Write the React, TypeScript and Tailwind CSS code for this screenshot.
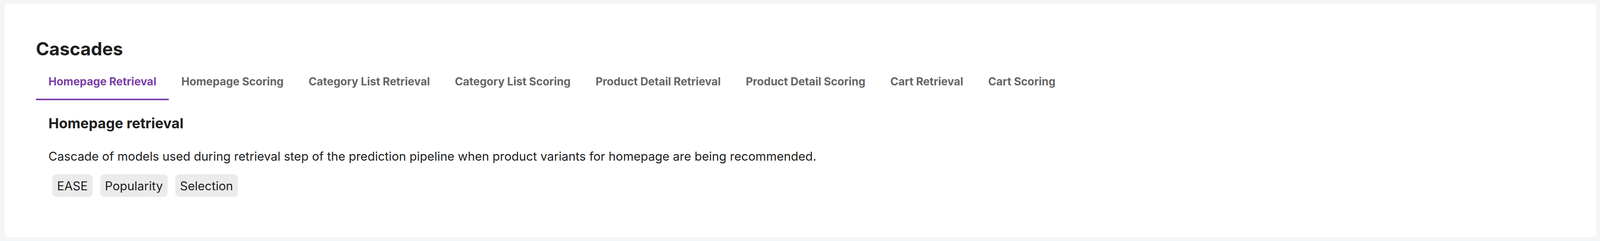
import { useState } from 'react';

const TABS = [
  'Homepage Retrieval',
  'Homepage Scoring',
  'Category List Retrieval',
  'Category List Scoring',
  'Product Detail Retrieval',
  'Product Detail Scoring',
  'Cart Retrieval',
  'Cart Scoring',
];

const MODELS = ['EASE', 'Popularity', 'Selection'];

export default function App() {
  const [active, setActive] = useState(0);

  return (
    <div className="h-[618px] bg-[#f4f5f7] py-[10px] pl-[12px] pr-[10px]" style={{ fontFamily: 'Inter, "Noto Sans", sans-serif' }}>
      <div className="h-full rounded-[8px] bg-white px-[80px] pt-[92px] text-[#1e1e1e]">
        <h1 className="text-[46px] leading-none font-bold mb-[17px]">Cascades</h1>

        {/* Tabs */}
        <div className="flex">
          {TABS.map((tab, i) => (
            <button
              key={tab}
              onClick={() => setActive(i)}
              className={`px-[32px] py-[30px] text-[28px] leading-none font-bold border-b-4 ${
                i === active ? 'text-[#7b3fa7] border-[#7b3fa7]' : 'text-[#666666] border-transparent'
              }`}
            >
              {tab}
            </button>
          ))}
        </div>

        {/* Panel */}
        <div className="px-[32px] pt-[41px]">
          <h3 className="text-[36px] leading-none font-bold mb-[51px]">Homepage retrieval</h3>
          <p className="text-[31px] leading-none mb-[31px]">
            Cascade of models used during retrieval step of the prediction pipeline when product variants for homepage are being recommended.
          </p>
          <div className="flex gap-[20px] ml-[10px]">
            {MODELS.map(m => (
              <span key={m} className="h-[58px] flex items-center px-[12px] rounded-[10px] bg-[#ebebeb] text-[31px] leading-none">
                {m}
              </span>
            ))}
          </div>
        </div>
      </div>
    </div>
  );
}
